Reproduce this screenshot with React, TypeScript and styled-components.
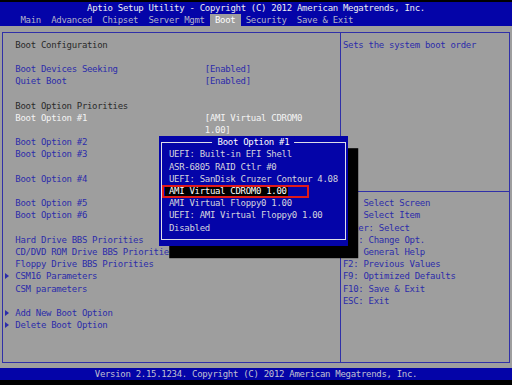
import React from 'react'
import styled, { createGlobalStyle } from 'styled-components'

// text grid of the setup screen: 100 columns x 31 rows
const CW = 5.12
const RH = 12.2

const BLUE = '#0404a8'
const GRAY = '#9e9e9e'
const INK = '#2c2caa'
const LINE = '#3030a8'

const GlobalStyle = createGlobalStyle`
    html, body {
        margin: 0;
        padding: 0;
        background: #000;
    }
`

const Screen = styled.div`
    position: relative;
    display: flex;
    flex-direction: column;
    box-sizing: border-box;
    width: 512px;
    height: 385px;
    padding-top: 2px;
    overflow: hidden;
    background: #000;
    font-family: "DejaVu Sans Mono", "Liberation Mono", monospace;
    font-size: 9px;
    letter-spacing: -0.3px;
    line-height: ${RH}px;
`

const TitleBar = styled.header`
    height: ${RH}px;
    background: ${BLUE};
    color: #ececf2;
    text-align: center;
    white-space: pre;
`

const Tabs = styled.nav`
    display: flex;
    height: ${RH}px;
    padding-left: ${3 * CW}px;
    background: ${BLUE};
    white-space: pre;
`

const Tab = styled.span<{ $active?: boolean }>`
    padding: 0 ${CW}px;
    color: ${props => props.$active ? '#ffffff' : '#b2b2c8'};
    background: ${props => props.$active ? GRAY : 'transparent'};
`

const Body = styled.main`
    display: flex;
    flex: 0 0 ${28 * RH}px;
    box-sizing: border-box;
    padding: 5.6px 2px 5.1px 2px;
    background: ${GRAY};
`

const Frame = styled.div`
    display: grid;
    flex: 1;
    grid-template-columns: 337px 1fr;
    border: 1px solid ${LINE};
`

const MainPanel = styled.section`
    padding: 5.6px 0 0 2.12px;
`

const Row = styled.div<{ $tone?: 'head' | 'active' }>`
    display: grid;
    grid-template-columns: ${2 * CW}px ${37 * CW}px ${19.5 * CW}px;
    min-height: ${RH}px;
    color: ${props => props.$tone === 'head' ? '#2a2a2a' : props.$tone === 'active' ? '#f4f4f4' : INK};
`

const Label = styled.span`
    white-space: pre;
`

const Value = styled.span`
    white-space: normal;
`

const Pointer = styled.span`
    display: inline-block;
    width: 0;
    height: 0;
    margin: 3px 0 0 0;
    border-left: 4px solid ${INK};
    border-top: 3px solid transparent;
    border-bottom: 3px solid transparent;
`

const SidePanel = styled.aside`
    display: flex;
    flex-direction: column;
    padding-top: 5.6px;
    border-left: 1px solid ${LINE};
`

const HelpText = styled.p`
    height: ${12 * RH}px;
    margin: 0;
    padding-left: 2px;
    color: ${INK};
    white-space: pre;
`

const Divider = styled.div`
    display: flex;
    align-items: center;
    height: ${RH}px;
    &::after {
        content: '';
        flex: 1;
        height: 1px;
        background: ${LINE};
    }
`

const KeyList = styled.ul`
    margin: 0;
    padding: 0 0 0 2px;
    list-style: none;
    color: ${INK};
    white-space: pre;
`

const Footer = styled.footer`
    height: ${RH}px;
    background: ${BLUE};
    color: #c0c0d2;
    text-align: center;
    white-space: pre;
`

const Popup = styled.div`
    position: absolute;
    left: ${31 * CW}px;
    top: ${2 + 11 * RH}px;
    display: flex;
    box-sizing: border-box;
    width: ${37 * CW}px;
    height: ${9 * RH}px;
    padding: 5.6px ${CW / 2 - 0.5}px;
    background: ${BLUE};
    box-shadow: ${2 * CW}px ${RH}px 0 #000;
`

const PickerFrame = styled.div`
    position: relative;
    flex: 1;
    box-sizing: border-box;
    padding: 5.6px 0 0 7.18px;
    border: 1px solid #dedee8;
`

const PickerTitle = styled.span`
    position: absolute;
    top: -6.6px;
    left: 50%;
    transform: translateX(-50%);
    padding: 0 ${CW}px;
    background: ${BLUE};
    color: #ffffff;
    white-space: pre;
`

const PickerItem = styled.div`
    height: ${RH}px;
    color: #d4d4de;
    white-space: pre;
`

const Highlight = styled.span`
    display: inline-block;
    height: ${RH}px;
    margin-left: -${CW * 0.8}px;
    padding: 0 1px 0 ${CW * 0.8}px;
    background: #000;
    color: #ffffff;
`

const Marker = styled.div`
    position: absolute;
    left: 3.3px;
    top: 48.8px;
    box-sizing: border-box;
    width: 147px;
    height: 13px;
    border: 2px solid #e01a1a;
`

type Line = {
    label?: string;
    value?: string;
    tone?: 'head' | 'active';
    pointer?: boolean;
}

const lines: Line[] = [
    { label: 'Boot Configuration', tone: 'head' },
    {},
    { label: 'Boot Devices Seeking', value: '[Enabled]' },
    { label: 'Quiet Boot', value: '[Enabled]' },
    {},
    { label: 'Boot Option Priorities', tone: 'head' },
    { label: 'Boot Option #1', value: '[AMI Virtual CDROM0 1.00]', tone: 'active' },
    { label: 'Boot Option #2' },
    { label: 'Boot Option #3' },
    {},
    { label: 'Boot Option #4' },
    {},
    { label: 'Boot Option #5' },
    { label: 'Boot Option #6' },
    {},
    { label: 'Hard Drive BBS Priorities' },
    { label: 'CD/DVD ROM Drive BBS Priorities' },
    { label: 'Floppy Drive BBS Priorities' },
    { label: 'CSM16 Parameters', pointer: true },
    { label: 'CSM parameters' },
    {},
    { label: 'Add New Boot Option', pointer: true },
    { label: 'Delete Boot Option', pointer: true },
]

const keys = [
    '→←: Select Screen',
    '↑↓: Select Item',
    'Enter: Select',
    '+/-: Change Opt.',
    'F1: General Help',
    'F2: Previous Values',
    'F9: Optimized Defaults',
    'F10: Save & Exit',
    'ESC: Exit',
]

const tabs = ['Main', 'Advanced', 'Chipset', 'Server Mgmt', 'Boot', 'Security', 'Save & Exit']

const choices = [
    'UEFI: Built-in EFI Shell',
    'ASR-6805 RAID Ctlr #0',
    'UEFI: SanDisk Cruzer Contour 4.08',
    'AMI Virtual CDROM0 1.00',
    'AMI Virtual Floppy0 1.00',
    'UEFI: AMI Virtual Floppy0 1.00',
    'Disabled',
]

const App = () => {
    const selected = 'AMI Virtual CDROM0 1.00'

    return (
        <>
            <GlobalStyle />
            <Screen>
                <TitleBar>Aptio Setup Utility - Copyright (C) 2012 American Megatrends, Inc.</TitleBar>
                <Tabs>
                    {tabs.map(tab => (
                        <Tab key={tab} $active={tab === 'Boot'}>{tab}</Tab>
                    ))}
                </Tabs>
                <Body>
                    <Frame>
                        <MainPanel>
                            {lines.map((line, i) => (
                                <Row key={i} $tone={line.tone}>
                                    <span>{line.pointer && <Pointer />}</span>
                                    <Label>{line.label}</Label>
                                    <Value>{line.value}</Value>
                                </Row>
                            ))}
                        </MainPanel>
                        <SidePanel>
                            <HelpText>Sets the system boot order</HelpText>
                            <Divider />
                            <KeyList>
                                {keys.map(k => <li key={k}>{k}</li>)}
                            </KeyList>
                        </SidePanel>
                    </Frame>
                </Body>
                <Footer>Version 2.15.1234. Copyright (C) 2012 American Megatrends, Inc.</Footer>

                <Popup>
                    <PickerFrame>
                        <PickerTitle>Boot Option #1</PickerTitle>
                        {choices.map(c => (
                            <PickerItem key={c}>
                                {c === selected ? <Highlight>{c}</Highlight> : c}
                            </PickerItem>
                        ))}
                    </PickerFrame>
                    <Marker />
                </Popup>
            </Screen>
        </>
    )
}

export default App
